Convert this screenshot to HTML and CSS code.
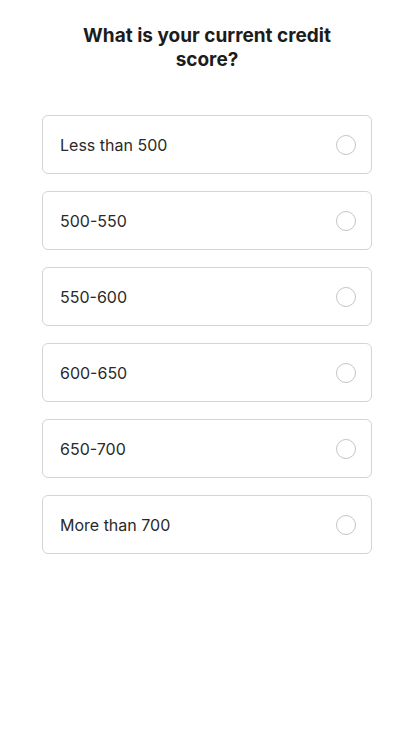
FILE: index.html
```html
<!DOCTYPE html>
<html lang="en">
<head>
    <meta charset="UTF-8">
    <meta name="viewport" content="width=device-width, initial-scale=1.0">
    <title>Credit score</title>
    <link rel="stylesheet" href="styles.css">
</head>
<body>

    <div class="quiz">
        <h2 class="question">What is your current credit score?</h2>

        <div class="options">
            <label class="option">
                <span>Less than 500</span>
                <input type="radio" name="score" value="lt500">
                <span class="radio"></span>
            </label>
            <label class="option">
                <span>500-550</span>
                <input type="radio" name="score" value="500-550">
                <span class="radio"></span>
            </label>
            <label class="option">
                <span>550-600</span>
                <input type="radio" name="score" value="550-600">
                <span class="radio"></span>
            </label>
            <label class="option">
                <span>600-650</span>
                <input type="radio" name="score" value="600-650">
                <span class="radio"></span>
            </label>
            <label class="option">
                <span>650-700</span>
                <input type="radio" name="score" value="650-700">
                <span class="radio"></span>
            </label>
            <label class="option">
                <span>More than 700</span>
                <input type="radio" name="score" value="gt700">
                <span class="radio"></span>
            </label>
        </div>
    </div>

</body>
</html>
```

FILE: styles.css
```css
body { font-family: Inter, "Open Sans", Arial, sans-serif; background-color: #fff; margin: 0; padding: 0; color: #222; }
.quiz { padding: 24px 42px; }
.question { font-size: 19px; line-height: 24px; font-weight: 700; color: #1c1c1c; text-align: center; margin: 0 0 43px; padding: 0 20px; }
.options { display: flex; flex-direction: column; gap: 17px; }
.option { height: 59px; box-sizing: border-box; border: 1.5px solid #d4d4d4; border-radius: 6px; padding: 1px 15px 0 17px; display: flex; justify-content: space-between; align-items: center; font-size: 16px; color: #2a2a2a; cursor: pointer; }
.option input { display: none; }
.radio { width: 20px; height: 20px; box-sizing: border-box; border: 1px solid #c4c4c4; border-radius: 50%; }
.option input:checked + .radio { border: 6px solid #4CAF50; }
```
